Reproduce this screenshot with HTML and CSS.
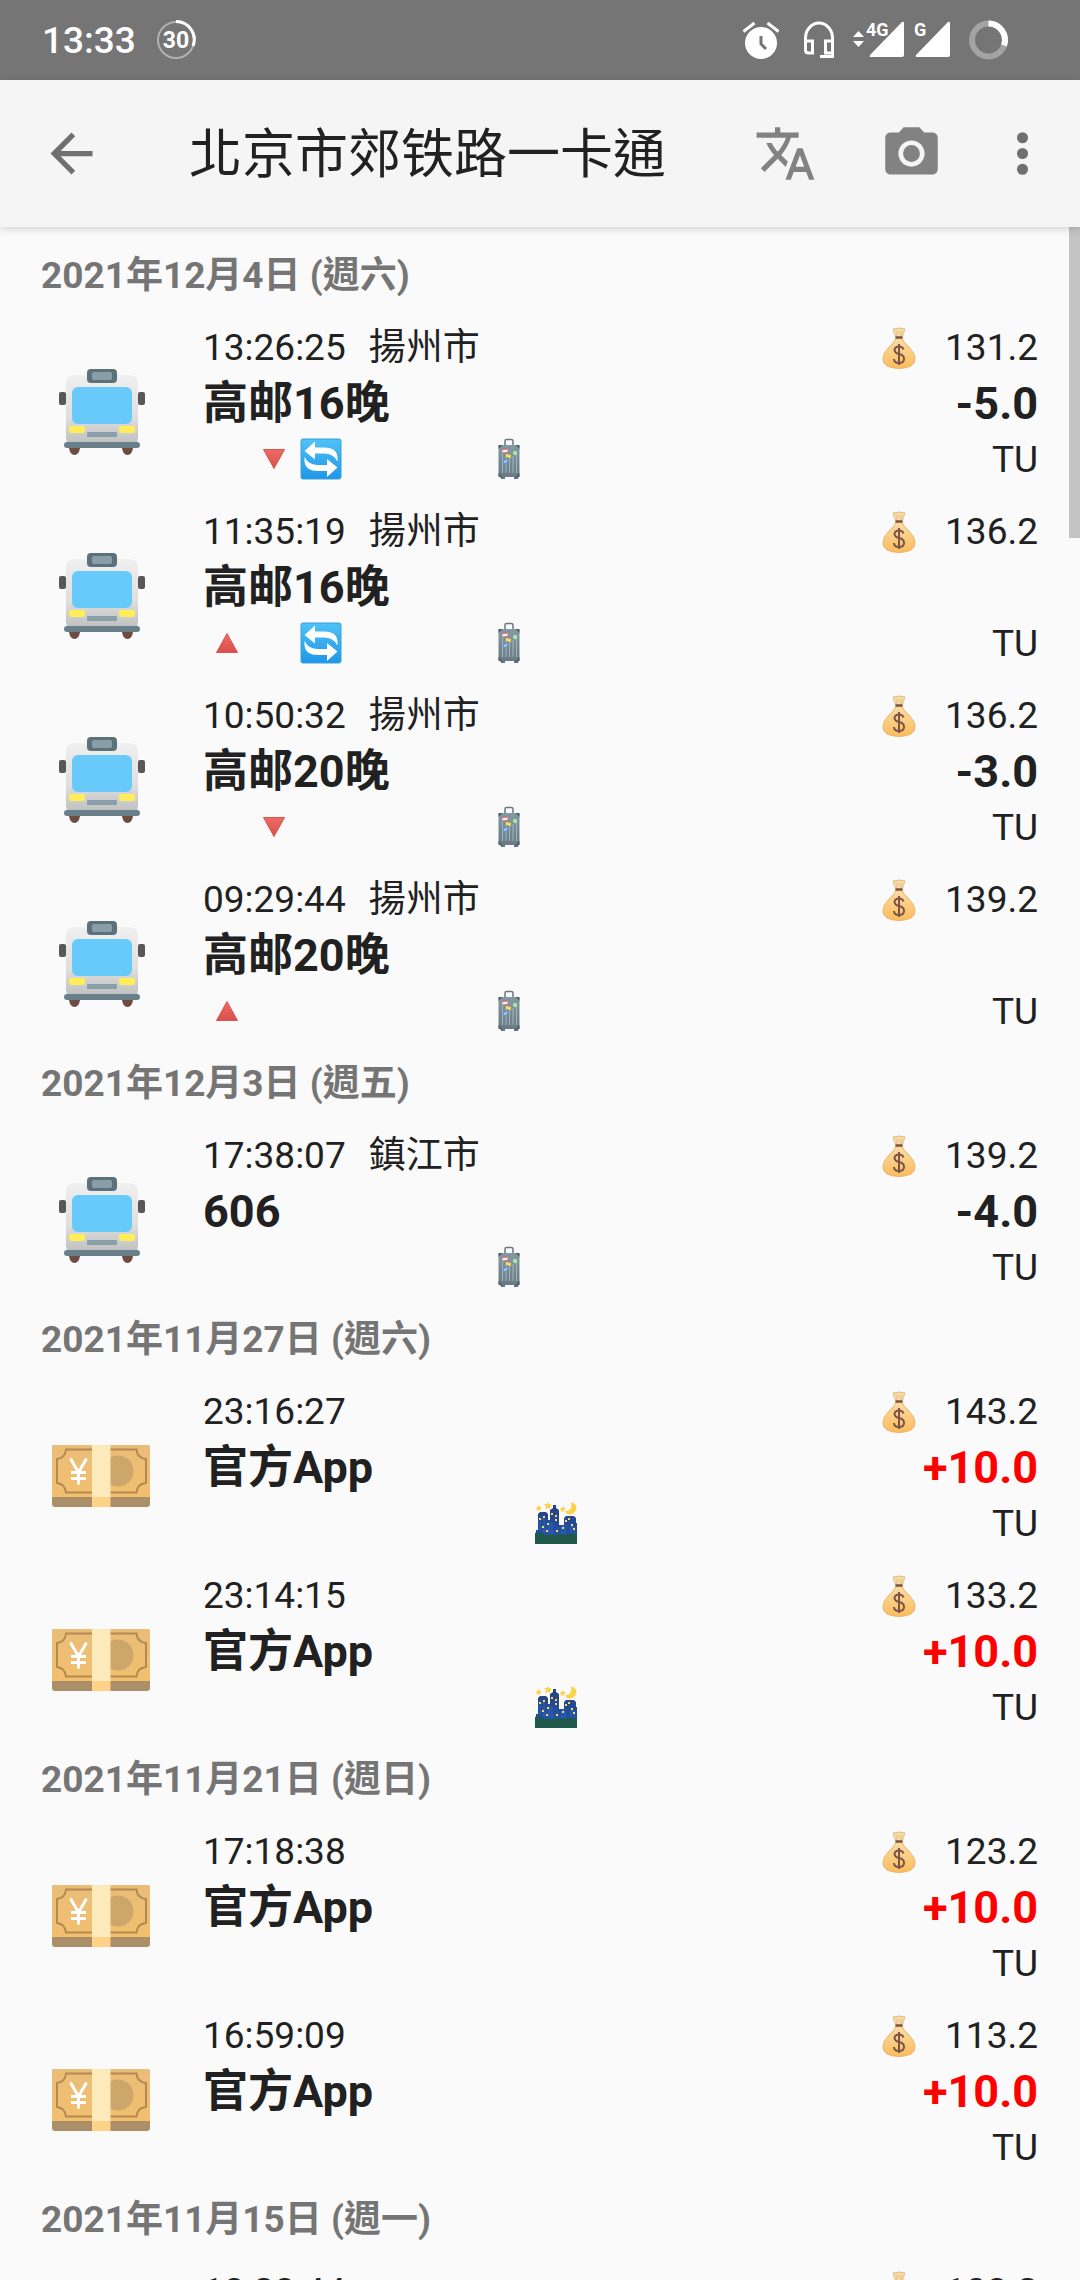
FILE: index.html
```
<!DOCTYPE html>
<html lang="zh-Hant">
<head>
<meta charset="utf-8">
<meta name="viewport" content="width=device-width, initial-scale=1">
<title>北京市郊铁路一卡通</title>
<link rel="stylesheet" href="styles.css">
</head>
<body>
<svg class="defs" aria-hidden="true">
  <defs>
    <linearGradient id="gBody" x1="0" y1="0" x2="0" y2="1"><stop offset="0" stop-color="#f0f0f0"/><stop offset=".6" stop-color="#dedede"/><stop offset="1" stop-color="#bdbdbd"/></linearGradient>
    <linearGradient id="gBlue" x1="0" y1="0" x2="0" y2="1"><stop offset="0" stop-color="#4fc3f7"/><stop offset="1" stop-color="#1e96e8"/></linearGradient>
    <linearGradient id="gRed" x1="0" y1="0" x2="0" y2="1"><stop offset="0" stop-color="#ef6a66"/><stop offset="1" stop-color="#d84f4b"/></linearGradient>
    <linearGradient id="gBag" x1="0" y1="0" x2="0" y2="1"><stop offset="0" stop-color="#fbdca6"/><stop offset="1" stop-color="#fbbc5c"/></linearGradient>
    <linearGradient id="gNote" x1="0" y1="0" x2="0" y2="1"><stop offset="0" stop-color="#eabd78"/><stop offset="1" stop-color="#f2bf6e"/></linearGradient>
    <linearGradient id="gCase" x1="0" y1="0" x2="0" y2="1"><stop offset="0" stop-color="#8399a3"/><stop offset="1" stop-color="#687b85"/></linearGradient>
    <linearGradient id="gCity" x1="0" y1="0" x2="0" y2="1"><stop offset="0" stop-color="#27427c"/><stop offset="1" stop-color="#1e56b4"/></linearGradient>
  </defs>
  <symbol id="bus" viewBox="0 0 100 100">
    <path d="M18 82h11v4q-1 7-5.500 7t-5.500-7zM71 82h11v4q-1 7-5.500 7t-5.500-7z" fill="#6d4c41"/>
    <rect x="15" y="13" width="72" height="71" rx="8" fill="url(#gBody)"/>
    <rect x="36" y="7" width="30" height="14" rx="4" fill="#5d717b"/>
    <rect x="41" y="10" width="20" height="8" rx="2" fill="#8a9ea9"/>
    <rect x="21" y="25" width="60" height="37" rx="6" fill="#68cafa"/>
    <rect x="8" y="30" width="7" height="13" rx="2" fill="#585858"/>
    <rect x="87" y="30" width="7" height="13" rx="2" fill="#585858"/>
    <rect x="18" y="64" width="16" height="7" rx="2" fill="#ffee58"/>
    <rect x="68" y="64" width="16" height="7" rx="2" fill="#ffee58"/>
    <rect x="36" y="70" width="30" height="5" rx="1" fill="#8a9ea9"/>
    <rect x="13" y="80" width="76" height="6" rx="3" fill="#69808a"/>
  </symbol>
  <symbol id="note" viewBox="0 0 100 100">
    <rect x="1" y="19" width="98" height="62" rx="3" fill="#aa8f68"/>
    <path d="M1 22q0-3 3-3h92q3 0 3 3v49h-98z" fill="url(#gNote)"/>
    <path d="M15 23.500H85.500Q86 32 95 33V57Q86 58 85.500 66.500H15Q14 58 6 57V33Q14 32 15 23.500z" fill="none" stroke="#b28a52" stroke-width="2"/>
    <circle cx="67" cy="45" r="15.500" fill="#cda669"/>
    <path d="M41 19h18.500v52H41z" fill="#fdeabb"/>
    <path d="M41 71h18.500v10H41z" fill="#ffd28a"/>
    <path d="M19.500 32.500L27.500 46.500 35.500 32.500M27.500 46v12.500M20 46.500h15M20 52.500h15" fill="none" stroke="#fff" stroke-width="3"/>
  </symbol>
  <symbol id="bag" viewBox="0 0 42 42">
    <path d="M15 2q6-2 12 0l-3 9h-6z" fill="#f8d9a5" stroke="#e3bf88" stroke-width="1"/>
    <path d="M19 4v6M23 4v6" stroke="#dfb980" stroke-width="1"/>
    <path d="M18 11h6q1 4 6 8 7 7 7 13 0 9-16 9.500Q5 41 5 32q0-6 7-13 5-4 6-8z" fill="url(#gBag)" stroke="#e9b668" stroke-width="1"/>
    <path d="M17.500 10.500h7" stroke="#7b5548" stroke-width="2.500"/>
    <path d="M25.500 22.500q-1-3-4.500-3t-4.500 3q0 3.500 4.500 4.500 5 1 5 5t-5 4-5-4M21 17v21" fill="none" stroke="#7b5548" stroke-width="2"/>
  </symbol>
  <symbol id="down" viewBox="0 0 42 42"><path d="M10.500 11.500h21L21 30.500z" fill="url(#gRed)" stroke="#dc5450" stroke-width="1" stroke-linejoin="round"/></symbol>
  <symbol id="up" viewBox="0 0 42 42"><path d="M10.500 30.500h21L21 11.500z" fill="url(#gRed)" stroke="#dc5450" stroke-width="1" stroke-linejoin="round"/></symbol>
  <symbol id="swap" viewBox="0 0 42 42">
    <rect x="1" y="1" width="40" height="40" rx="2" fill="url(#gBlue)" stroke="#3c9fd8" stroke-width="1"/>
    <path d="M4.500 13L15 3.500v6h9q13 0 13.500 10v4q-4-8-13.500-8h-9v6z" fill="#fff"/>
    <path d="M37.500 29.500L27 39v-6h-9Q5 33 4.500 23v-4q4 8 13.500 8h9v-6z" fill="#fff"/>
  </symbol>
  <symbol id="case" viewBox="0 0 42 42">
    <path d="M17 8V3q0-1.500 1.500-1.500h5Q25 1.500 25 3v5" fill="none" stroke="#67777f" stroke-width="1.500"/>
    <path d="M12 38h5v3h-4zM26 38h5l-1 3h-4z" fill="#65747c"/>
    <rect x="10.500" y="7" width="21" height="32" rx="2" fill="url(#gCase)"/>
    <path d="M14.500 13v22M18 17v18M21.500 20v15M25 18v17M28.500 13v22" stroke="#a3b3ba" stroke-width="1"/>
    <path d="M10.500 7h4l-4 4zM31.500 7h-4l4 4zM10.500 39v-4l4 4zM31.500 39v-4l-4 4z" fill="#4f5f68"/>
    <path d="M14 12l6-1v3l-6 1z" fill="#fff" stroke="#e57373" stroke-width="1"/>
    <circle cx="27" cy="15" r="2.200" fill="#a5e6a0"/><path d="M18 16l5 1v3l-5-1z" fill="#fbdc4e"/>
    <path d="M15 26q0-4 5-5 0 4-5 5z" fill="#b6d4fa" stroke="#5590dd" stroke-width="1"/>
  </symbol>
  <symbol id="city" viewBox="0 0 42 42">
    <path d="M1 41V28h2V12l2-2h6l2 2v6h2V8l3-2V3h3v3l3 2v15h5v-7l2-2h8l2 2v5h2v20z" fill="url(#gCity)"/>
    <path d="M5 28V17h4v14M27 35V24h3v8M14 34V21h3v13M36 33V25h3v8" stroke="#3165b8" stroke-width="1" fill="none"/>
    <path d="M0 42V31q6-2 10 2 5-1 9 0 6-2 10 0 6-3 13-1v12z" fill="#20584e"/>
    <path d="M4 16h2v2H4zM8 14h2v2H8zM12 21h2v2h-2zM7 24h2v2H7zM11 28h2v2h-2zM16 11h2v2h-2zM20 13h2v2h-2zM20 17h2v2h-2zM21 28h2v2h-2zM27 25h2v2h-2zM30 18h2v2h-2zM33 16h2v2h-2zM36 22h2v2h-2zM38 26h2v2h-2z" fill="#ffd55a"/>
    <path d="M4 3l1 2 2 1-2 1 0 2-2-1-2 1 1-2-1-2h2zM13 0l1 2 3 1-2 2 0 2-2-1-3 1 1-3-2-2h3zM28 4l1 2 2 1-2 1 0 2-2-1-2 1 1-2-1-2h2z" fill="#fbd34b"/>
    <path d="M36 0q7 2 5 8-3 6-9 4-1-1-2-3 8 0 6-9z" fill="#fbd34b"/>
  </symbol>
</svg>

<header class="status">
  <span class="clock">13:33</span>
  <svg class="badge" viewBox="0 0 40 40" role="img" aria-label="30"><circle cx="20" cy="20" r="18" fill="none" stroke="#b0b0b0" stroke-width="2"/><path d="M20 1.500A18 18 0 0 1 37 26" fill="none" stroke="#fff" stroke-width="3"/><text x="20" y="28" text-anchor="middle" font-size="23">30</text></svg>
  <div class="indicators">
    <svg width="48" height="40" viewBox="0 0 48 40"><circle cx="24" cy="23" r="16" fill="#fff"/><path d="M6.500 11.500L17.500 3M41.500 11.500L30.500 3" stroke="#fff" stroke-width="3"/><path d="M24 16v8l5 5" fill="none" stroke="#757575" stroke-width="3"/></svg>
    <svg width="48" height="40" viewBox="0 0 48 40"><path d="M10.500 22v-4a13.500 15 0 0 1 27 0v18.500H25M10.500 21h7v12h-4q-3 0-3-3zM37.500 21h-7v12h7z" fill="none" stroke="#fff" stroke-width="3"/></svg>
    <svg width="51" height="40" viewBox="0 0 51 40"><path d="M0 17l5.500-6 5.500 6zM0 21h11l-5.500 6zM49 2q2-1 2 1v32q0 2-2 2H18q-2 0-1-2z" fill="#fff"/><text x="13" y="16" font-size="18" stroke="#757575" stroke-width="3" paint-order="stroke">4G</text></svg>
    <svg width="36" height="40" viewBox="0 0 36 40"><path d="M34 2q2-1 2 1v32q0 2-2 2H3q-2 0-1-2z" fill="#fff"/><text x="0" y="16" font-size="18" stroke="#757575" stroke-width="3" paint-order="stroke">G</text></svg>
    <svg width="57" height="40" viewBox="0 0 57 40"><circle cx="28.500" cy="20" r="16.500" fill="none" stroke="#a3a3a3" stroke-width="6"/><path d="M28.500 3.500A16.500 16.500 0 0 1 44 25.500" fill="none" stroke="#fff" stroke-width="6"/></svg>
  </div>
</header>

<nav class="toolbar">
  <button class="back" type="button" aria-label="返回"><svg viewBox="0 0 24 24"><path d="M20 11H7.830l5.590-5.590L12 4l-8 8 8 8 1.410-1.410L7.830 13H20v-2z"/></svg></button>
  <h1>北京市郊铁路一卡通</h1>
  <button class="action" type="button" aria-label="翻譯"><svg viewBox="0 0 24 24"><path d="M12.870 15.070l-2.540-2.510.03-.03c1.740-1.940 2.980-4.170 3.710-6.530H17V4h-7V2H8v2H1v1.990h11.170C11.500 7.920 10.440 9.750 9 11.350 8.070 10.320 7.300 9.190 6.690 8h-2c.73 1.630 1.730 3.170 2.980 4.560l-5.090 5.020L4 19l5-5 3.110 3.110.76-2.040zM18.500 10h-2L12 22h2l1.120-3h4.750L21 22h2l-4.500-12zm-2.620 7l1.620-4.330L19.120 17h-3.240z"/></svg></button>
  <button class="action" type="button" aria-label="拍照"><svg viewBox="0 0 24 24"><circle cx="12" cy="12" r="3.200"/><path d="M9 2L7.170 4H4c-1.100 0-2 .9-2 2v12c0 1.100.9 2 2 2h16c1.100 0 2-.9 2-2V6c0-1.100-.9-2-2-2h-3.170L15 2H9zm3 15c-2.760 0-5-2.240-5-5s2.240-5 5-5 5 2.240 5 5-2.240 5-5 5z"/></svg></button>
  <button class="more" type="button" aria-label="更多"><svg viewBox="0 0 24 24"><circle cx="12" cy="6" r="2.100"/><circle cx="12" cy="12" r="2.100"/><circle cx="12" cy="18" r="2.100"/></svg></button>
</nav>

<main class="list">
  <div class="scrollbar"></div>

  <h2>2021年12月4日 (週六)</h2>
  <article class="row">
    <svg class="kind"><use href="#bus"/></svg>
    <div class="info"><p class="time">13:26:25<span class="town">揚州市</span></p><p class="name">高邮16晚</p><div class="tags"><svg class="c2"><use href="#down"/></svg><svg class="c3"><use href="#swap"/></svg><svg class="c7"><use href="#case"/></svg></div></div>
    <div class="money"><p class="balance"><svg><use href="#bag"/></svg>131.2</p><p class="amount">-5.0</p><p class="type">TU</p></div>
  </article>
  <article class="row">
    <svg class="kind"><use href="#bus"/></svg>
    <div class="info"><p class="time">11:35:19<span class="town">揚州市</span></p><p class="name">高邮16晚</p><div class="tags"><svg class="c1"><use href="#up"/></svg><svg class="c3"><use href="#swap"/></svg><svg class="c7"><use href="#case"/></svg></div></div>
    <div class="money"><p class="balance"><svg><use href="#bag"/></svg>136.2</p><p class="amount"></p><p class="type">TU</p></div>
  </article>
  <article class="row">
    <svg class="kind"><use href="#bus"/></svg>
    <div class="info"><p class="time">10:50:32<span class="town">揚州市</span></p><p class="name">高邮20晚</p><div class="tags"><svg class="c2"><use href="#down"/></svg><svg class="c7"><use href="#case"/></svg></div></div>
    <div class="money"><p class="balance"><svg><use href="#bag"/></svg>136.2</p><p class="amount">-3.0</p><p class="type">TU</p></div>
  </article>
  <article class="row">
    <svg class="kind"><use href="#bus"/></svg>
    <div class="info"><p class="time">09:29:44<span class="town">揚州市</span></p><p class="name">高邮20晚</p><div class="tags"><svg class="c1"><use href="#up"/></svg><svg class="c7"><use href="#case"/></svg></div></div>
    <div class="money"><p class="balance"><svg><use href="#bag"/></svg>139.2</p><p class="amount"></p><p class="type">TU</p></div>
  </article>

  <h2>2021年12月3日 (週五)</h2>
  <article class="row">
    <svg class="kind"><use href="#bus"/></svg>
    <div class="info"><p class="time">17:38:07<span class="town">鎮江市</span></p><p class="name">606</p><div class="tags"><svg class="c7"><use href="#case"/></svg></div></div>
    <div class="money"><p class="balance"><svg><use href="#bag"/></svg>139.2</p><p class="amount">-4.0</p><p class="type">TU</p></div>
  </article>

  <h2>2021年11月27日 (週六)</h2>
  <article class="row">
    <svg class="kind"><use href="#note"/></svg>
    <div class="info"><p class="time">23:16:27</p><p class="name">官方App</p><div class="tags"><svg class="c8"><use href="#city"/></svg></div></div>
    <div class="money"><p class="balance"><svg><use href="#bag"/></svg>143.2</p><p class="amount plus">+10.0</p><p class="type">TU</p></div>
  </article>
  <article class="row">
    <svg class="kind"><use href="#note"/></svg>
    <div class="info"><p class="time">23:14:15</p><p class="name">官方App</p><div class="tags"><svg class="c8"><use href="#city"/></svg></div></div>
    <div class="money"><p class="balance"><svg><use href="#bag"/></svg>133.2</p><p class="amount plus">+10.0</p><p class="type">TU</p></div>
  </article>

  <h2>2021年11月21日 (週日)</h2>
  <article class="row">
    <svg class="kind"><use href="#note"/></svg>
    <div class="info"><p class="time">17:18:38</p><p class="name">官方App</p><div class="tags"></div></div>
    <div class="money"><p class="balance"><svg><use href="#bag"/></svg>123.2</p><p class="amount plus">+10.0</p><p class="type">TU</p></div>
  </article>
  <article class="row">
    <svg class="kind"><use href="#note"/></svg>
    <div class="info"><p class="time">16:59:09</p><p class="name">官方App</p><div class="tags"></div></div>
    <div class="money"><p class="balance"><svg><use href="#bag"/></svg>113.2</p><p class="amount plus">+10.0</p><p class="type">TU</p></div>
  </article>

  <h2>2021年11月15日 (週一)</h2>
  <article class="row">
    <svg class="kind"><use href="#note"/></svg>
    <div class="info"><p class="time">18:28:44</p></div>
    <div class="money"><p class="balance"><svg><use href="#bag"/></svg>103.2</p></div>
  </article>
</main>
</body>
</html>
```
FILE: styles.css
```
* { box-sizing: border-box; margin: 0; padding: 0; }

body {
  display: flex;
  flex-direction: column;
  height: 100vh;
  overflow: hidden;
  background: #fafafa;
  color: #212121;
  font-family: Roboto, "Noto Sans CJK TC", "Noto Sans CJK SC", sans-serif;
  font-size: 37px;
}

svg { display: block; flex: none; }
.defs { position: absolute; width: 0; height: 0; }

.status {
  display: flex;
  align-items: center;
  flex: none;
  height: 80px;
  padding: 0 63px 0 42px;
  background: #757575;
  color: #fff;
}
.clock { font-size: 37px; font-weight: 500; }
.badge { width: 40px; height: 40px; margin-left: 20px; }
.status text { fill: #fff; font-weight: 700; }
.indicators { display: flex; gap: 10px; margin-left: auto; }

.toolbar {
  display: flex;
  align-items: center;
  flex: none;
  height: 147px;
  padding-right: 10px;
  background: #f5f5f5;
  box-shadow: 0 2px 8px rgba(0, 0, 0, .16);
  z-index: 1;
}
.toolbar h1 {
  flex: 1;
  margin-left: 46px;
  padding-top: 3px;
  font-size: 53px;
  font-weight: 400;
  line-height: 80px;
  white-space: nowrap;
}
.toolbar button {
  display: flex;
  justify-content: center;
  align-items: center;
  flex: none;
  height: 100%;
  border: 0;
  background: none;
}
.toolbar svg { width: 63px; height: 63px; fill: #707070; }
.toolbar .back { width: 142px; margin-right: 1px; }
.toolbar .action { width: 126px; }
.toolbar .action svg { fill: #828282; }
.toolbar .more { width: 96px; }

.list {
  position: relative;
  flex: 1;
  min-height: 0;
  padding-top: 13px;
  overflow: hidden;
}
.scrollbar {
  position: absolute;
  top: 0;
  right: 0;
  width: 11px;
  height: 311px;
  background: #c4c4c4;
}
h2 {
  padding-left: 41px;
  color: #757575;
  font-size: 37px;
  font-weight: 700;
  line-height: 72px;
}

.row {
  display: flex;
  height: 184px;
  padding: 9px 42px 0 0;
}
.kind { width: 100px; height: 100px; margin: 41px 52px 0 51px; }
.info { flex: 1; }
.time, .balance, .type { line-height: 54px; }
.town { margin-left: 23px; }
.name, .amount {
  height: 58px;
  font-size: 45px;
  font-weight: 700;
  line-height: 58px;
}
.tags {
  display: grid;
  grid-template-columns: repeat(8, 47px);
  align-items: center;
  justify-items: center;
  height: 52px;
}
.tags svg { grid-row: 1; width: 42px; height: 42px; }
.c1 { grid-column: 1; }
.c2 { grid-column: 2; }
.c3 { grid-column: 3; }
.c7 { grid-column: 7; }
.c8 { grid-column: 8; }

.money { text-align: right; }
.balance { display: flex; align-items: center; justify-content: flex-end; }
.balance svg { width: 42px; height: 42px; margin-right: 25px; }
.amount.plus { color: #f00; }
```
